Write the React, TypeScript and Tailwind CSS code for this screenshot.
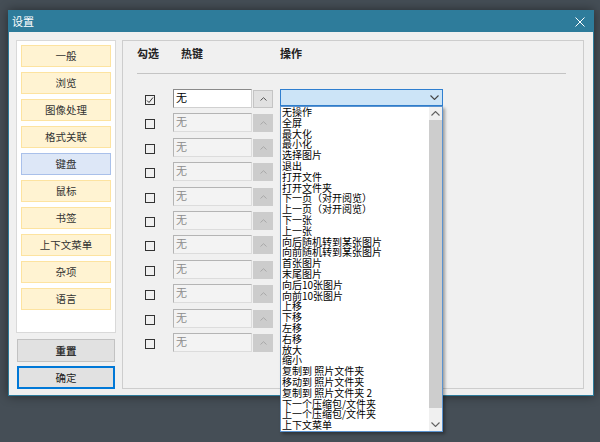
const navItems = ['一般', '浏览', '图像处理', '格式关联', '键盘', '鼠标', '书签', '上下文菜单', '杂项', '语言'];

const actions = [
    '无操作', '全屏', '最大化', '最小化', '选择图片', '退出', '打开文件', '打开文件夹',
    '下一页（对开阅览）', '上一页（对开阅览）', '下一张', '上一张',
    '向后随机转到某张图片', '向前随机转到某张图片', '首张图片', '末尾图片',
    '向后10张图片', '向前10张图片', '上移', '下移', '左移', '右移', '放大', '缩小',
    '复制到 照片文件夹', '移动到 照片文件夹', '复制到 照片文件夹 2',
    '下一个压缩包/文件夹', '上一个压缩包/文件夹', '上下文菜单',
];

function Chevron({ up, className }: { up?: boolean; className?: string }) {
    return (
        <svg width="9" height="5" viewBox="0 0 9 5" className={className}>
            <polyline
                points={up ? '0.5,4.5 4.5,0.5 8.5,4.5' : '0.5,0.5 4.5,4.5 8.5,0.5'}
                fill="none"
                stroke="currentColor"
                strokeWidth="1.1"
            />
        </svg>
    );
}

function ActionList() {
    return (
        <div className="absolute left-0 top-full w-[163px] h-[326px] bg-white border border-[#5b93cf] shadow-[2px_2px_3px_rgba(0,0,0,0.35)] flex z-10">
            <div className="flex-1 pl-[1px] text-[10px] leading-[10.8px] text-black whitespace-nowrap overflow-hidden">
                {actions.map(a => (
                    <div key={a}>{a}</div>
                ))}
            </div>
            <div className="w-[13px] bg-[#f0f0f0] flex flex-col">
                <div className="h-[13px] flex items-center justify-center text-[#606060]">
                    <Chevron up />
                </div>
                <div className="h-[288px] bg-[#cdcdcd]"></div>
                <div className="flex-1"></div>
                <div className="h-[13px] flex items-center justify-center text-[#606060]">
                    <Chevron />
                </div>
            </div>
        </div>
    );
}

function HotkeyRow({ first }: { first?: boolean }) {
    return (
        <div className="h-[24.4px] flex items-start pl-[22px]">
            <div className="mt-[6px] w-[10px] h-[10px] border border-[#333] bg-transparent flex items-center justify-center">
                {first && (
                    <svg width="8" height="8" viewBox="0 0 8 8">
                        <polyline points="1,4.5 3,6.5 7,1.5" fill="none" stroke="#333" strokeWidth="1" />
                    </svg>
                )}
            </div>
            <div
                className={
                    first
                        ? 'ml-[18px] w-[79px] h-[19px] bg-white border border-[#8a8a8a] border-b-[#d0d0d0] border-r-[#d0d0d0] text-[11px] leading-[15px] pl-[2px] text-black'
                        : 'ml-[18px] w-[79px] h-[19px] bg-[#f3f3f3] border border-[#b4b4b4] border-b-[#dcdcdc] border-r-[#dcdcdc] text-[11px] leading-[15px] pl-[2px] text-[#8c8c8c]'
                }
            >
                无
            </div>
            <div
                className={
                    first
                        ? 'ml-[1px] mt-[1px] w-[20px] h-[18px] bg-[#e1e1e1] border border-[#c4c4c4] flex items-center justify-center text-[#555]'
                        : 'ml-[1px] mt-[1px] w-[20px] h-[18px] bg-[#cccccc] flex items-center justify-center text-[#a8a8a8]'
                }
            >
                <svg width="7" height="4" viewBox="0 0 7 4">
                    <polyline points="0.5,3.5 3.5,0.7 6.5,3.5" fill="none" stroke="currentColor" strokeWidth="1" />
                </svg>
            </div>
            {first && (
                <div className="ml-[7px] relative">
                    <div className="w-[163px] h-[17px] bg-[#cce4f7] border border-[#2f7fd0] flex items-center justify-end pr-[3px] text-[#444]">
                        <Chevron />
                    </div>
                    <ActionList />
                </div>
            )}
        </div>
    );
}

export default function App() {
    return (
        <div className="w-[600px] h-[442px] bg-[#454e56] pt-[10px] pl-[8px] font-['Noto_Sans_CJK_SC',sans-serif] overflow-hidden">
            <div className="w-[586px] h-[386px] flex flex-col bg-[#f0f0f0] border border-[#2e7c9b] shadow-[0_0_10px_rgba(0,0,0,0.45)]">
                {/* Title bar */}
                <div className="h-[21px] bg-[#2e7c9b] flex items-center justify-between pl-[3px] pr-[8px] text-white text-[11px]">
                    <span>设置</span>
                    <svg width="10" height="10" viewBox="0 0 10 10">
                        <path d="M0.5 0.5 L9.5 9.5 M9.5 0.5 L0.5 9.5" stroke="white" strokeWidth="1" />
                    </svg>
                </div>

                <div className="flex-1 flex pt-[8px] pl-[7px] gap-[6px]">
                    {/* Left navigation */}
                    <div className="w-[100px] flex flex-col">
                        <div className="h-[293px] bg-white border border-[#d9d9d9] pt-[4px] px-[4px] flex flex-col gap-[5px]">
                            {navItems.map(n => (
                                <div
                                    key={n}
                                    className={
                                        n === '键盘'
                                            ? 'h-[22px] bg-[#dde7f7] border border-[#a9c0ea] flex items-center justify-center text-[10.5px] text-[#333]'
                                            : 'h-[22px] bg-[#fff3d2] border border-[#fde3a0] flex items-center justify-center text-[10.5px] text-[#333]'
                                    }
                                >
                                    {n}
                                </div>
                            ))}
                        </div>
                        <div className="mt-[6px] ml-[1px] w-[98px] h-[23px] bg-[#e1e1e1] border border-[#c2c2c2] flex items-center justify-center text-[10.5px] font-bold text-[#333]">
                            重置
                        </div>
                        <div className="mt-[4px] ml-[1px] w-[98px] h-[23px] bg-[#e1e1e1] border-2 border-[#0078d7] flex items-center justify-center text-[10.5px] text-[#222]">
                            确定
                        </div>
                    </div>

                    {/* Hotkey panel */}
                    <div className="w-[462px] h-[349px] border border-[#cdcdcd] flex flex-col">
                        <div className="mt-[5px] pl-[14px] flex text-[11px] leading-[14px] font-bold text-[#222]">
                            <span className="w-[44px]">勾选</span>
                            <span className="w-[99px]">热键</span>
                            <span>操作</span>
                        </div>
                        <div className="mt-[13px] ml-[14px] w-[429px] h-px bg-[#c4c4c4]"></div>
                        <div className="mt-[15px] flex flex-col">
                            {Array.from({ length: 11 }).map((_, i) => (
                                <HotkeyRow key={i} first={i === 0} />
                            ))}
                        </div>
                    </div>
                </div>
            </div>
        </div>
    );
}
